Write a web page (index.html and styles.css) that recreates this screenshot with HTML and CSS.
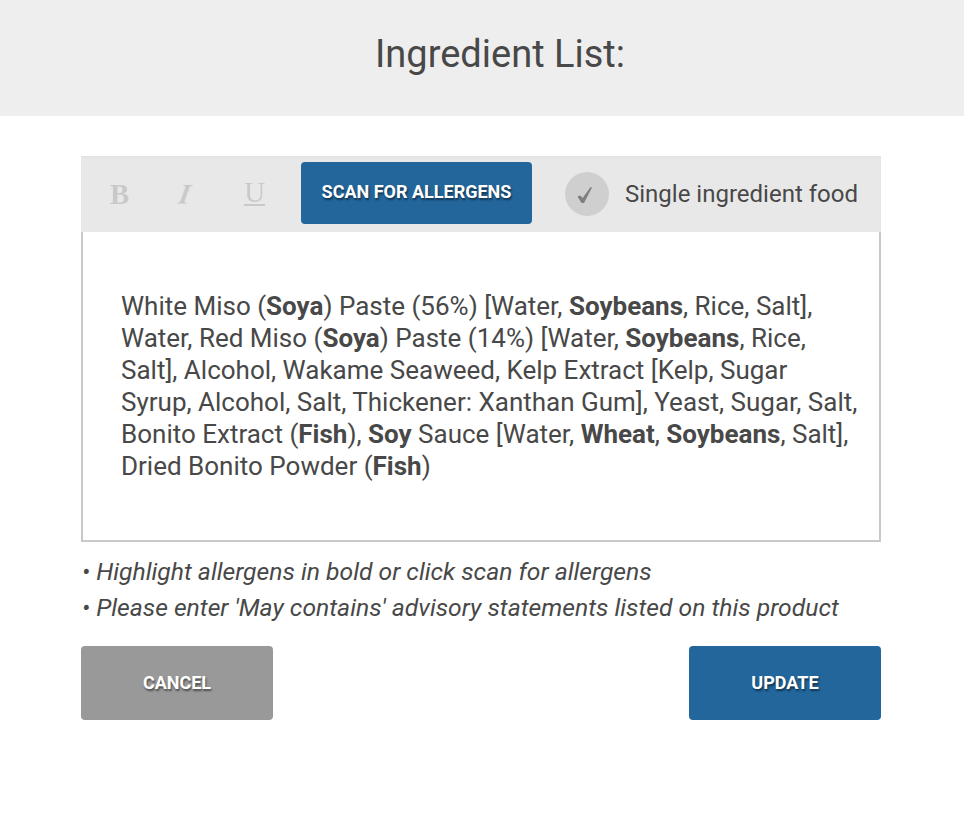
FILE: index.html
```html
<!DOCTYPE html>
<html lang="en">
<head>
<meta charset="utf-8">
<title>Ingredient List</title>
<link rel="stylesheet" href="styles.css">
</head>
<body>
<header class="head"><h1 class="title">Ingredient List:</h1></header>
<main class="content">
  <div class="toolbar">
    <div class="format">
      <span class="fmt fmt-b">B</span>
      <span class="fmt fmt-i">I</span>
      <span class="fmt fmt-u">U</span>
    </div>
    <button class="btn btn-scan">SCAN FOR ALLERGENS</button>
    <div class="single">
      <span class="check"><svg class="check-icon" width="20" height="20" viewBox="0 0 20 20"><path d="M0.4 12.6 L3.4 11.4 L5.6 14 L13.6 3 L15 3.6 L7 19 L4.6 19 Z" fill="#7f7f7f"/></svg></span>
      <span class="single-label">Single ingredient food</span>
    </div>
  </div>
  <div class="editor">White Miso (<b>Soya</b>) Paste (56%) [Water, <b>Soybeans</b>, Rice, Salt], Water, Red Miso (<b>Soya</b>) Paste (14%) [Water, <b>Soybeans</b>, Rice, Salt], Alcohol, Wakame Seaweed, Kelp Extract [Kelp, Sugar Syrup, Alcohol, Salt, Thickener: Xanthan Gum], Yeast, Sugar, Salt, Bonito Extract (<b>Fish</b>), <b>Soy</b> Sauce [Water, <b>Wheat</b>, <b>Soybeans</b>, Salt], Dried Bonito Powder (<b>Fish</b>)</div>
  <div class="notes">
    <p class="note">• Highlight allergens in bold or click scan for allergens</p>
    <p class="note">• Please enter 'May contains' advisory statements listed on this product</p>
  </div>
  <div class="actions">
    <button class="btn btn-action btn-cancel">CANCEL</button>
    <button class="btn btn-action btn-update">UPDATE</button>
  </div>
</main>
</body>
</html>
```
FILE: styles.css
```css
* { box-sizing: border-box; }
html, body { margin: 0; padding: 0; background: #fff; }
body { font-family: Roboto, sans-serif; color: #444; height: 819px; overflow: hidden; }
.head { height: 116px; background: #eee; display: flex; align-items: center; justify-content: center; padding-left: 36px; }
.title { margin: 0 0 8px; font-size: 38px; font-weight: 400; color: #484848; line-height: 44px; }
.content { width: 800px; margin: 40px 0 0 81px; }
.toolbar { height: 76px; background: #e8e8e8; box-shadow: inset 0 3px 3px -2px #e0e0e0; display: flex; align-items: center; }
.format { width: 220px; display: flex; padding-left: 29px; height: 100%; align-items: center; }
.fmt { width: 68px; font-family: "Liberation Serif", serif; font-size: 29px; color: #c9c9c9; line-height: 1; filter: blur(.7px); }
.fmt-b { font-weight: 700; }
.fmt-i { font-style: italic; font-weight: 700; padding-left: 6px; transform: skewX(-10deg); }
.fmt-u { padding-left: 7px; text-decoration: underline; text-underline-offset: 2px; margin-top: -3px; }
.btn { border: 0; border-radius: 4px; font-family: Roboto, sans-serif; font-weight: 700; color: #fff; font-size: 18px; text-shadow: 1px 2px 2px rgba(0,0,0,.5); padding: 0 0 2px; }
.btn-scan { width: 231px; height: 62px; background: #22669c; position: relative; top: -1px; padding-bottom: 3px; }
.single { display: flex; align-items: center; margin-left: 33px; }
.check { width: 44px; height: 44px; border-radius: 50%; background: #cfcfcf; padding: 12px 0 0 12px; }
.check-icon { display: block; filter: blur(.4px); }
.single-label { margin-left: 16px; font-size: 24px; color: #484848; }
.editor { height: 310px; border: 2px solid #c9c9c9; border-top: 0; padding: 58px 20px 0 38px; font-size: 26px; line-height: 32px; color: #484848; }
.editor b { font-weight: 700; }
.notes { margin-top: 12px; padding-left: 1px; }
.note { margin: 0; font-size: 24.7px; font-style: italic; line-height: 36px; color: #484848; }
.actions { display: flex; justify-content: space-between; margin-top: 20px; }
.btn-action { width: 192px; height: 74px; }
.btn-cancel { background: #999; }
.btn-update { background: #22669c; }
```
